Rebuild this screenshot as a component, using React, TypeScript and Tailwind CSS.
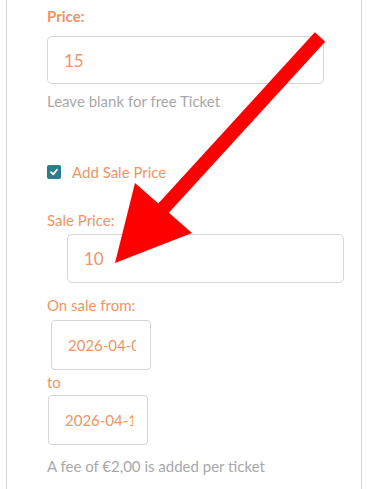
import React from "react";

const orange = "text-[#ef9466]";

const DateBox = ({ value, className }: { value: string; className: string }) => (
  <input
    readOnly
    value={value}
    className={`block h-[50px] w-[100px] rounded-[4px] border border-[#d6d6d6] bg-white pl-4 pr-[14px] text-[15px] ${orange} outline-none ${className}`}
  />
);

export default function App() {
  return (
    <div className="relative h-[489px] w-[368px] overflow-hidden bg-white font-['Lato',sans-serif]">
      <div className="mx-[6px] h-full border-x border-[#d4d4d4] pl-[40px]">
        <div className="pt-[6px]">
          <div className={`text-[15px] font-bold leading-5 ${orange}`}>Price:</div>
          <input
            readOnly
            value="15"
            className={`mt-[10px] block h-[48px] w-[277px] rounded-[5px] border border-[#d6d6d6] bg-white px-4 text-[17px] ${orange} outline-none`}
          />
          <div className="mt-[7px] text-[15px] leading-5 text-[#a8a8a8]">Leave blank for free Ticket</div>

          <label className="mt-[51px] flex h-5 items-center gap-[11px]">
            <span className="flex h-[14px] w-[14px] items-center justify-center rounded-[2px] bg-[#2b7d8c]">
              <svg width="10" height="10" viewBox="0 0 10 10">
                <path d="M2 5.2 L4.2 7.4 L8 2.8" fill="none" stroke="white" strokeWidth="1.8" strokeLinecap="round" strokeLinejoin="round" />
              </svg>
            </span>
            <span className={`text-[15px] ${orange}`}>Add Sale Price</span>
          </label>

          <div className={`mt-[28px] text-[15px] leading-5 ${orange}`}>Sale Price:</div>
          <input
            readOnly
            value="10"
            className={`ml-[20px] mt-[4px] block h-[49px] w-[277px] rounded-[5px] border border-[#d6d6d6] bg-white px-4 text-[17px] ${orange} outline-none`}
          />

          <div className={`mt-[12px] text-[15px] leading-5 ${orange}`}>On sale from:</div>
          <DateBox value="2026-04-04" className="ml-[4px] mt-[5px]" />
          <div className={`mt-[2px] text-[15px] leading-5 ${orange}`}>to</div>
          <DateBox value="2026-04-11" className="ml-[1px] mt-[3px]" />

          <div className="mt-[11px] text-[15px] leading-5 text-[#a8a8a8]">A fee of €2,00 is added per ticket</div>
        </div>
      </div>

      <svg className="pointer-events-none absolute left-0 top-0" width="368" height="489" viewBox="0 0 368 489">
        <line x1="320" y1="37" x2="160" y2="212" stroke="#ff0000" strokeWidth="14" />
        <polygon points="135,183 192,233 115,263" fill="#ff0000" />
      </svg>
    </div>
  );
}
